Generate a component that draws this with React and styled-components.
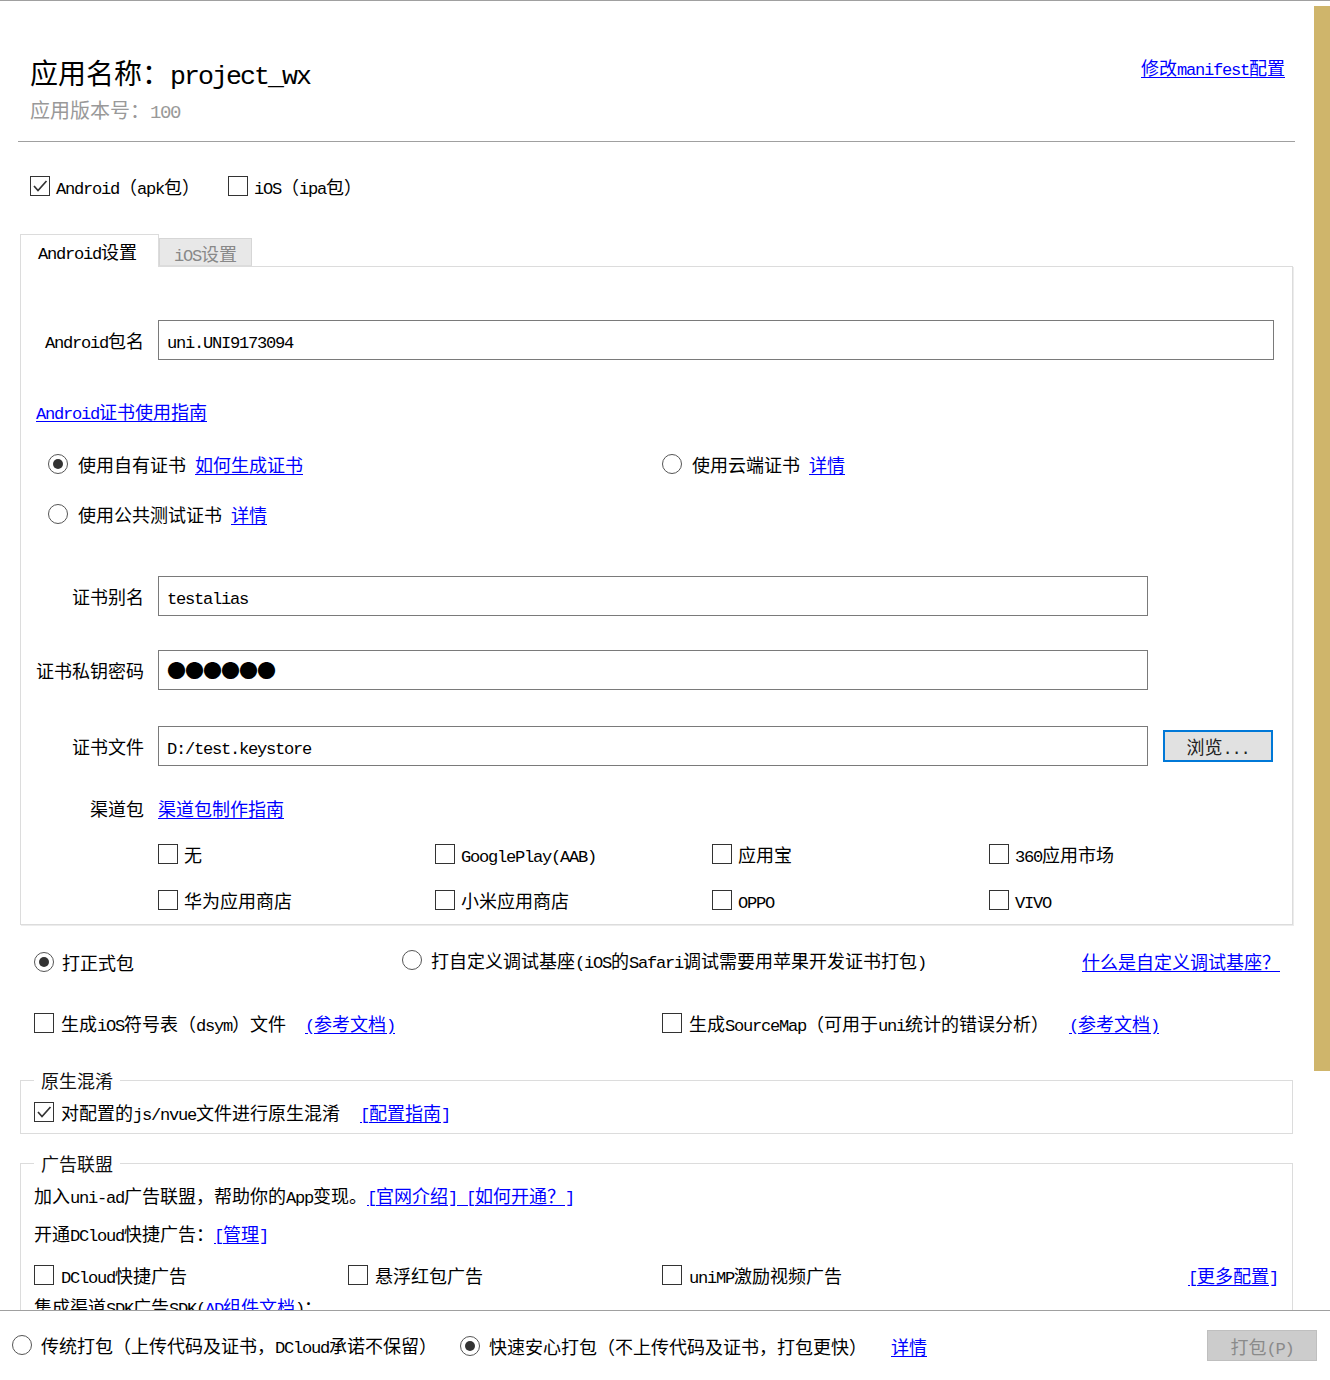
import React from 'react';
import styled, { createGlobalStyle } from 'styled-components';

const GlobalStyle = createGlobalStyle`
  html, body { margin: 0; padding: 0; background: #fff; }
  body {
    font-family: "Noto Sans CJK SC", sans-serif;
    font-weight: 400;
    font-size: 18px;
    line-height: 24px;
    color: #000;
  }
  * { box-sizing: border-box; }
`;

const Txt = styled.span`
  white-space: nowrap;
`;

const Lat = styled.span`
  font-family: "Liberation Mono", monospace;
  font-size: 0.95em;
  letter-spacing: -0.0737em;
  line-height: 0;
`;

const T = ({ children }) => {
  const s = String(children);
  const parts = s.split(/([\x20-\x7E]+)/);
  return <Txt>{parts.map((p, i) => (i % 2 ? <Lat key={i}>{p}</Lat> : p))}</Txt>;
};

const Window = styled.div`
  width: 1330px;
  height: 1380px;
  display: flex;
  flex-direction: column;
  overflow: hidden;
  background: #fff;
`;

const ScrollArea = styled.div`
  height: 1310px;
  flex: none;
  display: flex;
  border-top: 1px solid #a0a0a0;
  overflow: hidden;
`;

const Content = styled.div`
  flex: 1;
  min-width: 0;
  padding: 0 18px;
`;

const Track = styled.div`
  width: 17px;
  flex: none;
  padding: 5px 0 0 1px;
`;

const Thumb = styled.div`
  height: 1065px;
  background: #cfb56b;
`;

const Header = styled.div`
  display: flex;
  justify-content: space-between;
  align-items: flex-start;
  padding: 53px 10px 19px 12px;
  border-bottom: 1px solid #a0a0a0;
`;

const AppTitle = styled.div`
  font-size: 28px;
  line-height: 36px;
`;

const Version = styled.div`
  margin-top: 8px;
  font-size: 20px;
  color: #999;
`;

const Link = styled.a`
  color: #0000ff;
  text-decoration: underline;
  text-underline-offset: 2px;
  white-space: nowrap;
  cursor: pointer;
  margin-left: ${p => p.$gap || 0}px;
`;

const HeaderLink = styled(Link)`
  margin-top: 1px;
`;

const PlatformRow = styled.div`
  display: flex;
  align-items: center;
  gap: 28px;
  margin-top: 32px;
  padding-left: 12px;
  height: 24px;
`;

const CheckItem = styled.label`
  display: inline-flex;
  align-items: center;
  gap: ${p => p.$gap || 6}px;
  white-space: nowrap;
  height: 24px;
`;

const Box = styled.span`
  width: 20px;
  height: 20px;
  flex: none;
  border: 1px solid #333;
  background: #fff;
  display: inline-flex;
  align-items: center;
  justify-content: center;
`;

const Circle = styled.span`
  width: 20px;
  height: 20px;
  flex: none;
  border-radius: 50%;
  border: 1px solid #555;
  background: #fff;
  display: inline-flex;
  align-items: center;
  justify-content: center;
  &::after {
    content: '';
    width: 10px;
    height: 10px;
    border-radius: 50%;
    background: #333;
    display: ${p => (p.$checked ? 'block' : 'none')};
  }
`;

const Check = ({ checked, gap, children }) => (
  <CheckItem $gap={gap}>
    <Box>
      {checked && (
        <svg width="18" height="18" viewBox="0 0 18 18">
          <polyline points="3,9 7,13.5 15.5,4" fill="none" stroke="#333" strokeWidth="1.7" />
        </svg>
      )}
    </Box>
    <T>{children}</T>
  </CheckItem>
);

const Radio = ({ checked, gap, children }) => (
  <CheckItem $gap={gap || 10}>
    <Circle $checked={checked} />
    <T>{children}</T>
  </CheckItem>
);

const TabBar = styled.div`
  display: flex;
  align-items: flex-end;
  margin-top: 36px;
  padding-left: 2px;
  height: 32px;
`;

const Tab = styled.div`
  height: ${p => (p.$active ? 33 : 28)}px;
  padding: ${p => (p.$active ? '0 21px 0 17px' : '2px 14px 0')};
  display: flex;
  align-items: center;
  background: ${p => (p.$active ? '#fff' : '#e8e8e8')};
  color: ${p => (p.$active ? '#000' : '#888')};
  border: 1px solid ${p => (p.$active ? '#dcdcdc' : '#d6d6d6')};
  border-bottom: ${p => (p.$active ? 'none' : '1px solid #dcdcdc')};
  margin-bottom: ${p => (p.$active ? -1 : 0)}px;
  position: relative;
  z-index: ${p => (p.$active ? 1 : 0)};
`;

const Panel = styled.div`
  margin: 0 2px;
  border: 1px solid #dcdcdc;
  box-shadow: 1px 1px 0 #ececec;
  padding: 53px 18px 12px 0;
`;

const PackageRow = styled.div`
  display: grid;
  grid-template-columns: 123px 1fr;
  column-gap: 14px;
  align-items: center;
`;

const FieldLabel = styled.div`
  text-align: right;
  white-space: nowrap;
`;

const Field = styled.div`
  height: 40px;
  border: 1px solid #7a7a7a;
  background: #fff;
  padding-left: 8px;
  display: flex;
  align-items: center;
  white-space: nowrap;
`;

const Dots = styled.span`
  font-size: 19px;
  letter-spacing: -1px;
`;

const GuideLine = styled.div`
  margin-top: 39px;
  padding-left: 15px;
`;

const CertRadios = styled.div`
  display: grid;
  grid-template-columns: 614px 614px;
  row-gap: 26px;
  margin-top: 29px;
  padding-left: 27px;
`;

const CertRow = styled.div`
  display: grid;
  grid-template-columns: 123px 990px 110px;
  column-gap: 14px;
  align-items: center;
  margin-top: ${p => p.$top}px;
`;

const BrowseButton = styled.button`
  height: 32px;
  width: 110px;
  margin-left: 1px;
  background: #e1e1e1;
  border: 2px solid #0078d7;
  color: #222;
  font-family: inherit;
  font-size: 18px;
  padding: 0;
  line-height: 24px;
`;

const ChannelHead = styled.div`
  display: grid;
  grid-template-columns: 123px 1fr;
  column-gap: 14px;
  align-items: center;
  margin-top: 30px;
`;

const ChannelGrid = styled.div`
  display: grid;
  grid-template-columns: repeat(4, 277px);
  row-gap: 22px;
  margin-top: 22px;
  padding-left: 137px;
`;

const ModeRow = styled.div`
  display: grid;
  grid-template-columns: 368px auto 1fr;
  align-items: center;
  margin-top: 22px;
  padding: 0 15px 0 16px;
`;

const RightLink = styled(Link)`
  justify-self: end;
`;

const OptionRow = styled.div`
  display: grid;
  grid-template-columns: 628px 1fr;
  align-items: center;
  margin-top: 37px;
  padding-left: 16px;
`;

const Inline = styled.div`
  display: flex;
  align-items: center;
  white-space: nowrap;
`;

const Group = styled.fieldset`
  margin: ${p => p.$top}px 2px 0;
  border: 1px solid #dcdcdc;
  padding: 8px 14px 9px 13px;
  min-width: 0;
`;

const Legend = styled.legend`
  padding: 0 7px;
  line-height: 24px;
  color: #111;
`;

const TextLine = styled.div`
  margin-top: ${p => p.$top || 0}px;
  white-space: nowrap;
  display: flex;
  align-items: center;
  height: 24px;
`;

const AdChecks = styled.div`
  display: grid;
  grid-template-columns: 314px 314px 1fr auto;
  align-items: center;
  margin-top: 18px;
`;

const Footer = styled.div`
  flex: 1;
  display: flex;
  align-items: center;
  border-top: 1px solid #a0a0a0;
  padding: 0 13px 0 12px;
`;

const FooterItem = styled.div`
  width: ${p => p.$w}px;
  flex: none;
`;

const PackButton = styled.button`
  margin-left: auto;
  width: 110px;
  height: 31px;
  background: #cccccc;
  border: 1px solid #bfbfbf;
  color: #8a8a8a;
  font-family: inherit;
  font-size: 18px;
  line-height: 24px;
  padding: 0;
`;

const channels = [
  '无', 'GooglePlay(AAB)', '应用宝', '360应用市场',
  '华为应用商店', '小米应用商店', 'OPPO', 'VIVO',
];

export default function App() {
  return (
    <>
      <GlobalStyle />
      <Window>
        <ScrollArea>
          <Content>
            <Header>
              <div>
                <AppTitle><T>应用名称：project_wx</T></AppTitle>
                <Version><T>应用版本号：100</T></Version>
              </div>
              <HeaderLink><T>修改manifest配置</T></HeaderLink>
            </Header>

            <PlatformRow>
              <Check checked>Android（apk包）</Check>
              <Check>iOS（ipa包）</Check>
            </PlatformRow>

            <TabBar>
              <Tab $active><T>Android设置</T></Tab>
              <Tab><T>iOS设置</T></Tab>
            </TabBar>

            <Panel>
              <PackageRow>
                <FieldLabel><T>Android包名</T></FieldLabel>
                <Field><T>uni.UNI9173094</T></Field>
              </PackageRow>

              <GuideLine><Link><T>Android证书使用指南</T></Link></GuideLine>

              <CertRadios>
                <Inline>
                  <Radio checked>使用自有证书</Radio>
                  <Link $gap={9}>如何生成证书</Link>
                </Inline>
                <Inline>
                  <Radio>使用云端证书</Radio>
                  <Link $gap={9}>详情</Link>
                </Inline>
                <Inline>
                  <Radio>使用公共测试证书</Radio>
                  <Link $gap={9}>详情</Link>
                </Inline>
              </CertRadios>

              <CertRow $top={50}>
                <FieldLabel>证书别名</FieldLabel>
                <Field><T>testalias</T></Field>
              </CertRow>
              <CertRow $top={34}>
                <FieldLabel>证书私钥密码</FieldLabel>
                <Field><Dots>●●●●●●</Dots></Field>
              </CertRow>
              <CertRow $top={36}>
                <FieldLabel>证书文件</FieldLabel>
                <Field><T>D:/test.keystore</T></Field>
                <BrowseButton><T>浏览...</T></BrowseButton>
              </CertRow>

              <ChannelHead>
                <FieldLabel>渠道包</FieldLabel>
                <div><Link>渠道包制作指南</Link></div>
              </ChannelHead>

              <ChannelGrid>
                {channels.map(c => (
                  <Check key={c}>{c}</Check>
                ))}
              </ChannelGrid>
            </Panel>

            <ModeRow>
              <div><Radio checked gap={8}>打正式包</Radio></div>
              <div><Radio gap={9}>打自定义调试基座(iOS的Safari调试需要用苹果开发证书打包)</Radio></div>
              <RightLink>什么是自定义调试基座？</RightLink>
            </ModeRow>

            <OptionRow>
              <Inline>
                <Check gap={7}>生成iOS符号表（dsym）文件</Check>
                <Link $gap={19}><T>(参考文档)</T></Link>
              </Inline>
              <Inline>
                <Check gap={7}>生成SourceMap（可用于uni统计的错误分析）</Check>
                <Link $gap={20}><T>(参考文档)</T></Link>
              </Inline>
            </OptionRow>

            <Group $top={33}>
              <Legend>原生混淆</Legend>
              <Inline>
                <Check checked gap={7}>对配置的js/nvue文件进行原生混淆</Check>
                <Link $gap={20}><T>[配置指南]</T></Link>
              </Inline>
            </Group>

            <Group $top={17}>
              <Legend>广告联盟</Legend>
              <TextLine>
                <T>加入uni-ad广告联盟，帮助你的App变现。</T>
                <Link><T>[官网介绍] [如何开通？]</T></Link>
              </TextLine>
              <TextLine $top={14}>
                <T>开通DCloud快捷广告：</T>
                <Link><T>[管理]</T></Link>
              </TextLine>
              <AdChecks>
                <Check gap={7}>DCloud快捷广告</Check>
                <Check gap={7}>悬浮红包广告</Check>
                <Check gap={7}>uniMP激励视频广告</Check>
                <Link><T>[更多配置]</T></Link>
              </AdChecks>
              <TextLine $top={7}>
                <T>集成渠道SDK广告SDK(</T>
                <Link><T>AD组件文档</T></Link>
                <T>)：</T>
              </TextLine>
            </Group>
          </Content>
          <Track><Thumb /></Track>
        </ScrollArea>

        <Footer>
          <FooterItem $w={448}>
            <Radio gap={9}>传统打包（上传代码及证书，DCloud承诺不保留）</Radio>
          </FooterItem>
          <Radio checked gap={9}>快速安心打包（不上传代码及证书，打包更快）</Radio>
          <Link $gap={24}>详情</Link>
          <PackButton><T>打包(P)</T></PackButton>
        </Footer>
      </Window>
    </>
  );
}
